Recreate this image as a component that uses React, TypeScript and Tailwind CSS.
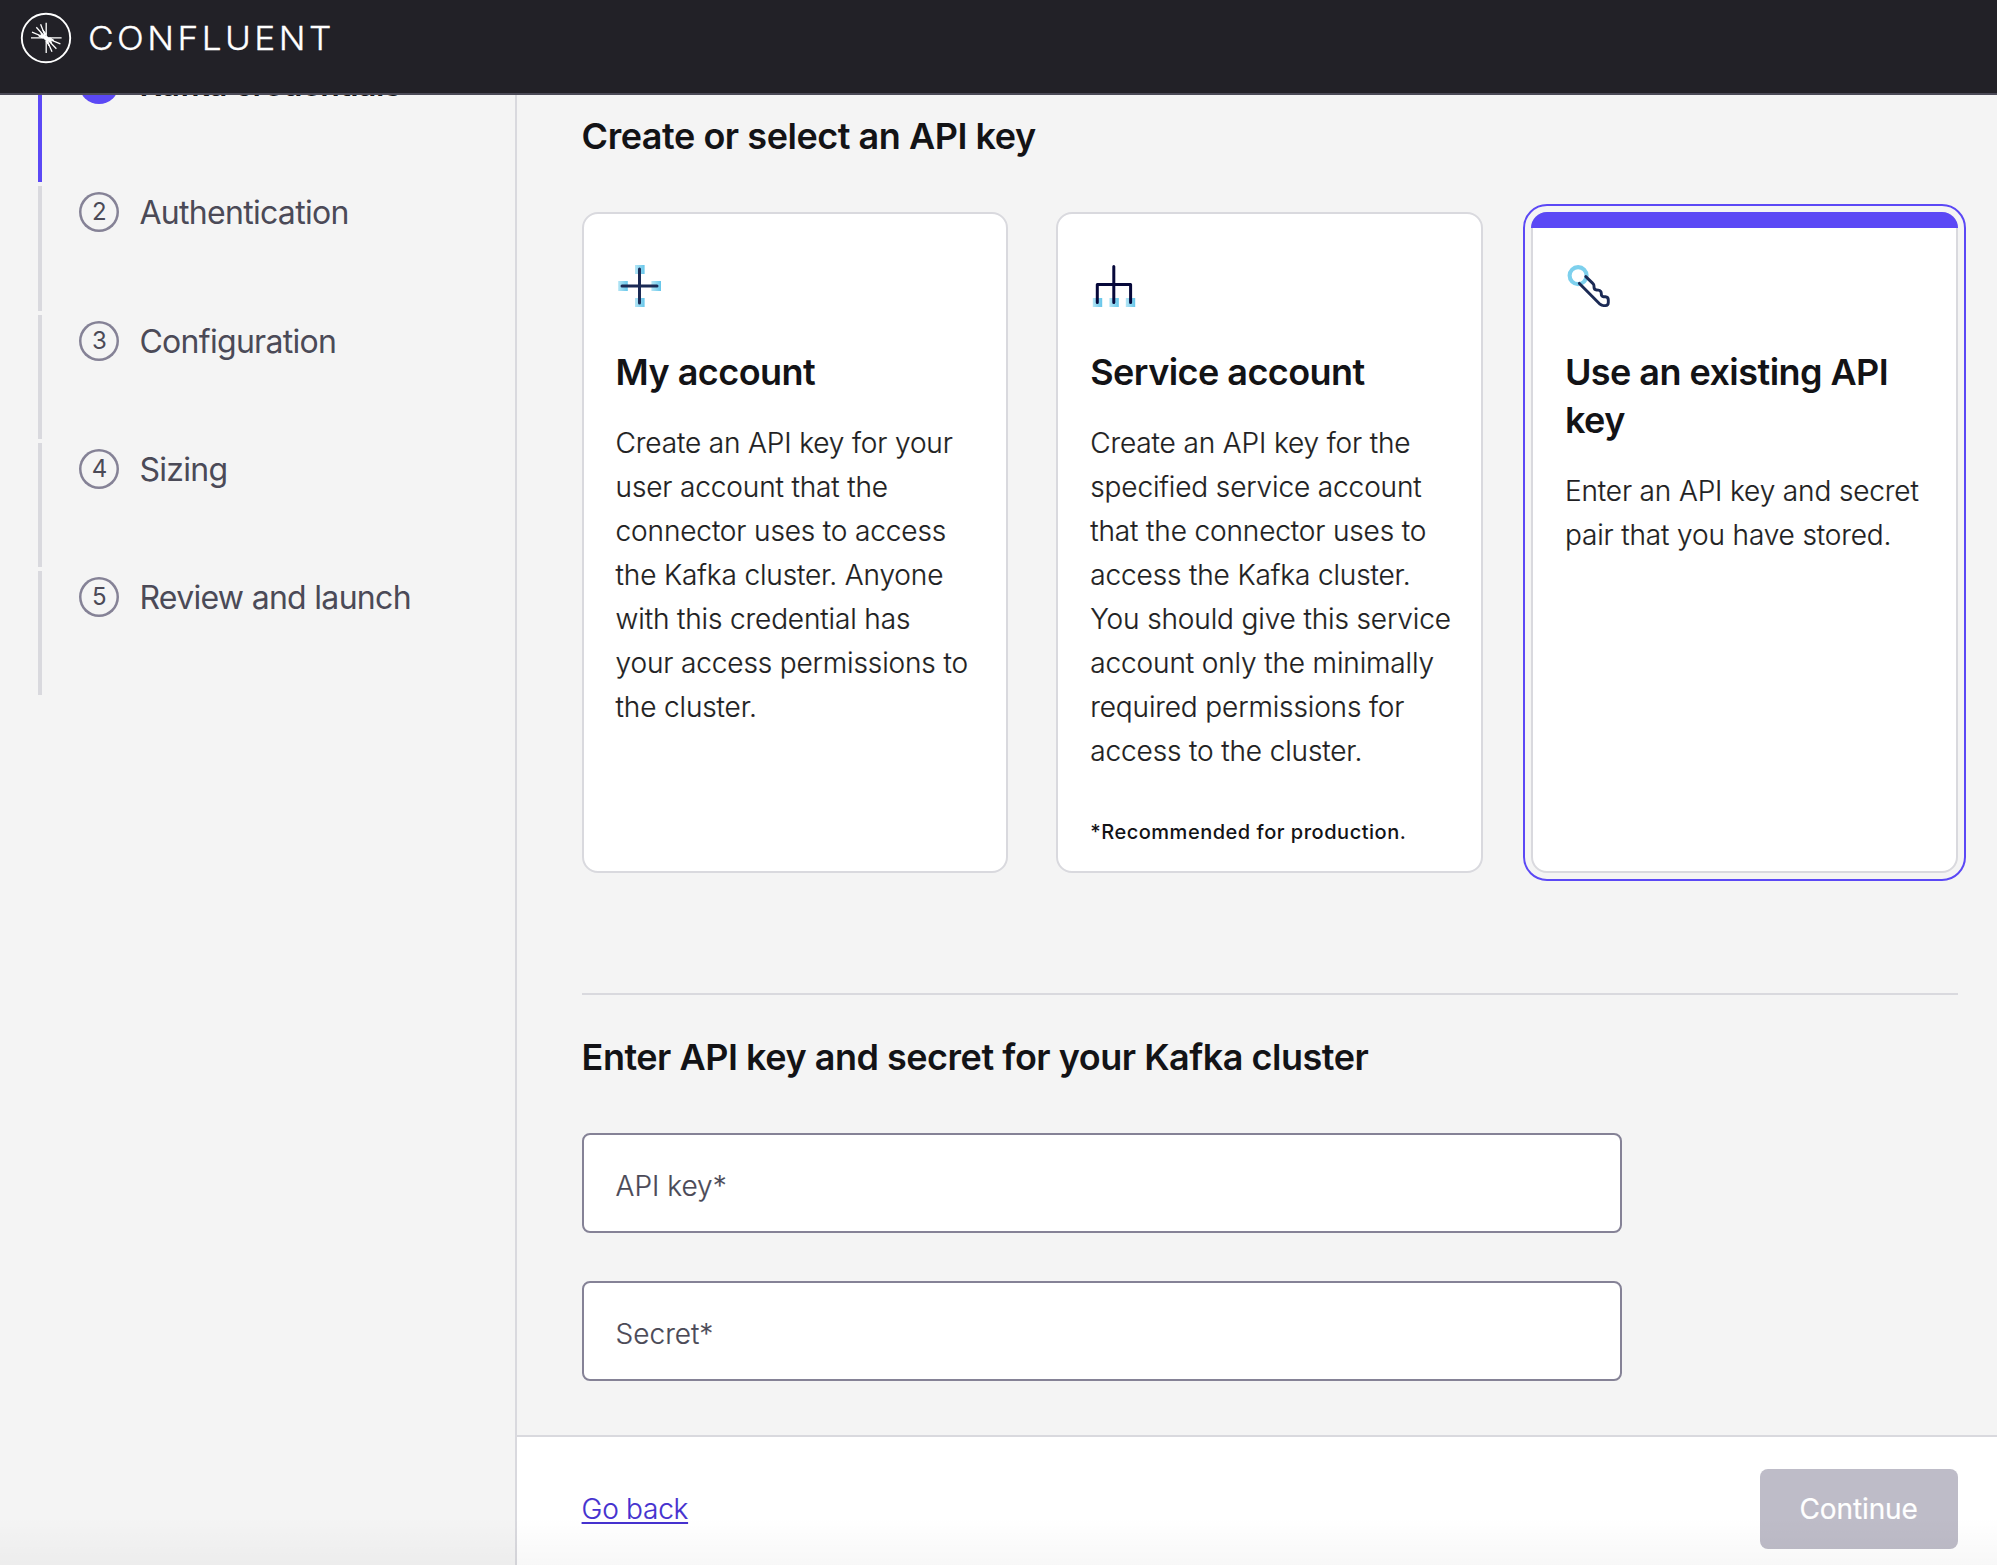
import type { ReactNode } from "react";

const steps = [
  { n: 1, label: "Kafka credentials", active: true },
  { n: 2, label: "Authentication" },
  { n: 3, label: "Configuration" },
  { n: 4, label: "Sizing" },
  { n: 5, label: "Review and launch" },
];

function Logo() {
  return (
    <div className="flex items-center text-white">
      <svg width="52" height="52" viewBox="0 0 52 52" fill="none" stroke="currentColor" className="shrink-0">
        <circle cx="26" cy="26" r="24.2" strokeWidth="1.9" />
        <g strokeWidth="1.3">
          <path d="M26.2 10.8V41M11 25.8H41.6" />
          <path d="M26 26 20.6 12.3M26 26 16.3 15.3M26 26 12 20.2M26 26 40.4 31.8M26 26 36.4 36.7M26 26 32 39.8" />
        </g>
        <path d="M26 26 20.9 21.5 22 24.8 18.5 23.8 22 25.8ZM26.2 22 23 18 25 23ZM26 26 31.6 30.7 30 27.2 34 28.5 30.5 26ZM26 29.5 29.3 34 27.5 29Z" fill="currentColor" strokeWidth="1" />
        <circle cx="26" cy="26" r="1.8" fill="currentColor" />
      </svg>
      <span className="mt-px ml-[15.5px] origin-left scale-x-110 text-[32px] leading-[40px] font-light tracking-[3.15px] [-webkit-text-stroke:0.3px_white]">
        CONFLUENT
      </span>
    </div>
  );
}

function PlusIcon() {
  return (
    <svg width="48" height="48" viewBox="0 0 48 48" fill="none">
      <defs>
        <linearGradient id="node" x1="0" y1="0" x2="1" y2="0">
          <stop offset="0" stopColor="#b4e5f5" />
          <stop offset="1" stopColor="#66c6ea" />
        </linearGradient>
      </defs>
      <g fill="url(#node)">
        <rect x="19" y="3" width="9.6" height="9" />
        <rect x="19" y="36" width="9.6" height="9" />
        <rect x="2.2" y="19" width="9.6" height="10" />
        <rect x="35.4" y="19" width="9.6" height="10" />
      </g>
      <path d="M23.5 7v34M6 24h35" stroke="#1b2a55" strokeWidth="3" strokeLinecap="round" />
    </svg>
  );
}

function TreeIcon() {
  return (
    <svg width="48" height="48" viewBox="0 0 48 48" fill="none">
      <g fill="url(#node)">
        <rect x="2.8" y="36" width="9.4" height="9" />
        <rect x="19.4" y="36" width="9.4" height="9" />
        <rect x="35.8" y="36" width="9.4" height="9" />
      </g>
      <path d="M23.8 4.5V40.5M7.3 40.5V22.6H40.6V40.5" stroke="#06083a" strokeWidth="3" strokeLinecap="round" strokeLinejoin="round" />
    </svg>
  );
}

function KeyIcon() {
  return (
    <svg width="48" height="48" viewBox="0 0 48 48" fill="none">
      <circle cx="13.1" cy="13.6" r="8.5" stroke="#7dd0ed" strokeWidth="4.1" />
      <path
        d="M14.4 21.4 35 42.2Q36.6 43.6 38.6 43.6H40.4Q43.3 43.4 43.3 40.4V38Q43.3 35 40.4 34.8L38.6 34.7Q36.3 34.4 36.3 32V31.4Q36.2 28.4 33.4 28.1L31.6 28Q29 27.8 29 25V24Q29 22.5 27.8 21.4L20.8 14.6"
        stroke="#1b2a55"
        strokeWidth="2.9"
        strokeLinecap="round"
        strokeLinejoin="round"
      />
    </svg>
  );
}

function Card({ icon, title, note, selected, children }: { icon: ReactNode; title: string; note?: string; selected?: boolean; children: ReactNode }) {
  return (
    <div
      className={
        selected
          ? "relative rounded-2xl border-2 border-[#d9d9de] bg-white pt-12 pr-6 pl-8 outline-2 outline-offset-[6px] outline-[#5b48f5]"
          : "relative rounded-2xl border-2 border-[#d9d9de] bg-white pt-12 pr-6 pl-8"
      }
    >
      {selected && (
        <div className="absolute -inset-0.5 overflow-hidden rounded-2xl">
          <div className="h-4 bg-[#5b48f5]" />
        </div>
      )}
      <div className="relative">
        {icon}
        <h3 className="mt-[38px] text-[36px] leading-[48px] font-semibold tracking-[-0.55px] text-[#131316]">{title}</h3>
        <p className="mt-[25px] text-[28px] leading-[44px] font-light tracking-[-0.13px] text-[#1f1f23] [-webkit-text-stroke:0.2px_#1f1f23]">{children}</p>
        {note && <p className="mt-[43px] text-[20px] leading-8 font-medium tracking-[0.52px] text-[#131316]">{note}</p>}
      </div>
    </div>
  );
}

function Field({ label }: { label: string }) {
  return (
    <label className="flex h-[100px] w-[1040px] items-center rounded-lg border-2 border-[#858296] bg-white px-8 pt-[6px] text-[28px] font-light text-[#4b4a57] [-webkit-text-stroke:0.2px_#4b4a57]">
      {label}
    </label>
  );
}

export default function App() {
  return (
    <div className="relative flex h-[1565px] w-[1997px] flex-col overflow-hidden bg-[#f4f4f4] font-['Inter',sans-serif] antialiased">
      <header className="flex h-[95px] shrink-0 items-start border-b-2 border-[#4b4a57] bg-[#222127] pt-3 pl-[20.4px]">
        <Logo />
      </header>

      <div className="flex min-h-0 flex-1">
        <aside className="w-[517.4px] shrink-0 overflow-hidden border-r-2 border-[#d9d9de]">
          <ol className="-mt-[37.05px] ml-[37.5px]">
            {steps.map((s) => (
              <li key={s.n} className="flex h-[128.3px] pb-1">
                <div className={s.active ? "w-1 bg-[#5b48f5]" : "w-1 bg-[#d9d9de]"} />
                <div className="flex items-start pt-[6px] pl-[37.9px]">
                  <span
                    className={
                      s.active
                        ? "h-10 w-10 rounded-full bg-[#5b48f5] text-center text-[24px] leading-[39px] text-white"
                        : "h-10 w-10 rounded-full text-center text-[24px] leading-[39px] text-[#4b4a57] shadow-[inset_0_0_0_2.5px_#858296]"
                    }
                  >
                    {s.n}
                  </span>
                  <span
                    className={
                      s.active
                        ? "mt-px ml-5 text-[32px] leading-[40px] font-semibold tracking-[-0.5px] text-[#131316]"
                        : "mt-px ml-5 text-[32px] leading-[40px] tracking-[-0.7px] text-[#4b4a57]"
                    }
                  >
                    {s.label}
                  </span>
                </div>
              </li>
            ))}
          </ol>
        </aside>

        <div className="flex min-w-0 flex-1 flex-col">
          <main className="flex-1 pr-[39.4px] pl-[64.2px]">
            <h2 className="pt-[17px] text-[36px] leading-[48px] font-semibold tracking-[-0.46px] text-[#131316]">
              Create or select an API key
            </h2>
            <div className="mt-[52px] grid h-[661px] grid-cols-3 gap-12">
              <Card icon={<PlusIcon />} title="My account">
                Create an API key for your user account that the connector uses to access the Kafka cluster. Anyone with this credential has
                <br />
                your access permissions to the cluster.
              </Card>
              <Card icon={<TreeIcon />} title="Service account" note="*Recommended for production.">
                Create an API key for the specified service account that the connector uses to access the Kafka cluster. You should give this service account only the minimally required permissions for access to the cluster.
              </Card>
              <Card icon={<KeyIcon />} title="Use an existing API key" selected>
                Enter an API key and secret pair that you have stored.
              </Card>
            </div>
            <div className="mt-[120px] border-t-2 border-[#d9d9de]" />
            <h2 className="mt-[38px] text-[36px] leading-[48px] font-semibold tracking-[-0.48px] text-[#131316]">
              Enter API key and secret for your Kafka cluster
            </h2>
            <div className="mt-[52px] flex flex-col gap-12">
              <Field label="API key*" />
              <Field label="Secret*" />
            </div>
          </main>

          <footer className="flex h-[130px] shrink-0 items-start justify-between border-t-2 border-[#d9d9de] bg-white pt-8 pr-[39.4px] pl-[64.2px]">
            <a className="mt-[18px] text-[28px] leading-[44px] font-light tracking-[-0.25px] text-[#4531cf] underline decoration-2 underline-offset-[3px] [-webkit-text-stroke:0.2px_#4531cf]">
              Go back
            </a>
            <button className="h-20 w-[198px] rounded-lg bg-[#bebcc8] text-[28px] tracking-[-0.1px] text-white [-webkit-text-stroke:0.2px_white]">Continue</button>
          </footer>
        </div>
      </div>

      <div className="pointer-events-none absolute inset-x-0 bottom-0 h-12 bg-linear-to-t from-black/3 to-transparent" />
    </div>
  );
}
